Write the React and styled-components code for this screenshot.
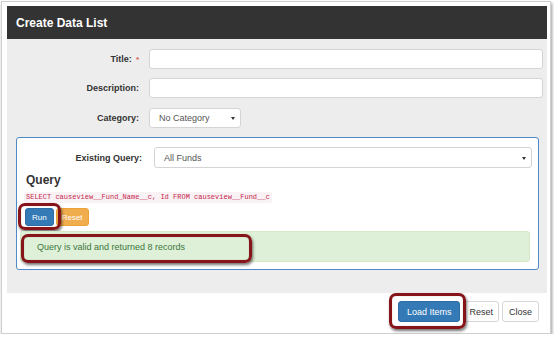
import styled, { createGlobalStyle } from "styled-components";

const GlobalStyle = createGlobalStyle`
  body {
    margin: 0;
    background: #fff;
    font-family: "Liberation Sans", Arial, sans-serif;
    color: #333;
  }
`;

const Frame = styled.div`
  box-sizing: border-box;
  width: 550px;
  height: 333px;
  margin: 1px 0 0 1px;
  border: 1px solid #cfcfcf;
  box-shadow: 1px 2px 3px rgba(0, 0, 0, 0.4);
  padding: 4px 4px 0 5px;
  background: #fff;
`;

const Modal = styled.div`
  width: 540px;
  display: flex;
  flex-direction: column;
`;

const Header = styled.div`
  height: 33px;
  background: #333;
  color: #fff;
  display: flex;
  align-items: center;
  padding-left: 9px;
  font-size: 12px;
  font-weight: bold;
`;

const Body = styled.div`
  box-sizing: border-box;
  height: 254px;
  background: #ededed;
  padding: 10px 4px 0 0;
  display: flex;
  flex-direction: column;
`;

const Row = styled.div`
  display: flex;
  align-items: center;
  gap: ${p => p.$gap || 10}px;
  margin-bottom: ${p => p.$mb || 0}px;
`;

const Label = styled.label`
  width: ${p => p.$w || 132}px;
  text-align: right;
  font-size: 9px;
  font-weight: bold;
  color: #333;
`;

const Req = styled.span`
  color: #d9534f;
  margin-left: 4px;
  font-size: 8px;
`;

const Input = styled.div`
  box-sizing: border-box;
  flex: 1;
  height: 20px;
  background: #fff;
  border: 1px solid #d4d4d4;
  border-radius: 3px;
`;

const Select = styled.div`
  box-sizing: border-box;
  position: relative;
  width: ${p => (p.$w ? `${p.$w}px` : "auto")};
  flex: ${p => (p.$w ? "none" : 1)};
  height: ${p => p.$h || 20}px;
  background: #fff;
  border: 1px solid #d4d4d4;
  border-radius: 3px;
  padding-left: 9px;
  display: flex;
  align-items: center;
  font-size: 9px;
  color: #555;

  &::after {
    content: "";
    position: absolute;
    right: 5px;
    top: 50%;
    margin-top: -1px;
    border-left: 2px solid transparent;
    border-right: 2px solid transparent;
    border-top: 3px solid #333;
  }
`;

const Panel = styled.div`
  box-sizing: border-box;
  height: 133px;
  margin: 0 4px 0 9px;
  background: #fff;
  border: 1px solid #4f8ac9;
  border-radius: 3px;
  padding: 9px 6px 0 3px;
  display: flex;
  flex-direction: column;
`;

const Heading = styled.div`
  margin: 5px 0 0 6px;
  font-size: 12px;
  line-height: 15px;
  font-weight: bold;
  color: #333;
`;

const Code = styled.code`
  align-self: flex-start;
  margin: 4px 0 0 4px;
  padding: 1px 2px;
  font-family: "Liberation Mono", "Courier New", monospace;
  font-size: 7px;
  line-height: 9px;
  color: #c7254e;
  background: #f9f2f4;
  border-radius: 2px;
`;

const ButtonRow = styled.div`
  display: flex;
  gap: ${p => p.$gap || 2}px;
  margin: ${p => p.$m || "0"};
  justify-content: ${p => p.$justify || "flex-start"};
`;

const Anchor = styled.div`
  position: relative;
  display: flex;
`;

const Button = styled.button`
  box-sizing: border-box;
  height: ${p => p.$h || 18}px;
  padding: 0 ${p => p.$px || 7}px;
  font-family: inherit;
  font-size: ${p => p.$fs || 8}px;
  border-radius: 3px;
  border: 1px solid
    ${p => (p.$kind === "primary" ? "#2e6da4" : p.$kind === "warning" ? "#eea236" : "#d6d6d6")};
  background: ${p => (p.$kind === "primary" ? "#337ab7" : p.$kind === "warning" ? "#f0ad4e" : "#fff")};
  color: ${p => (p.$kind === "primary" || p.$kind === "warning" ? "#fff" : "#333")};
`;

const Alert = styled.div`
  position: relative;
  box-sizing: border-box;
  height: 31px;
  margin: 5px 2px 0 0;
  background: #dff0d8;
  border: 1px solid #d6e9c6;
  border-radius: 3px;
  padding-left: 16px;
  display: flex;
  align-items: center;
  font-size: 9px;
  color: #3c763d;
`;

const Highlight = styled.span`
  position: absolute;
  top: ${p => p.$t}px;
  left: ${p => p.$l}px;
  width: ${p => p.$w}px;
  height: ${p => p.$h}px;
  box-sizing: border-box;
  border: 3px solid #861418;
  border-radius: 7px;
  box-shadow: 1px 2px 3px rgba(0, 0, 0, 0.55), inset 0 0 1px rgba(0, 0, 0, 0.4);
  pointer-events: none;
`;

const Footer = styled.div`
  height: 40px;
  padding: 8px 8px 0 0;
  box-sizing: border-box;
`;

export default function App() {
  return (
    <>
      <GlobalStyle />
      <Frame>
        <Modal>
          <Header>Create Data List</Header>
          <Body>
            <Row $mb={9}>
              <Label>
                Title:<Req>*</Req>
              </Label>
              <Input />
            </Row>
            <Row $mb={10}>
              <Label>Description:</Label>
              <Input />
            </Row>
            <Row $mb={9}>
              <Label>Category:</Label>
              <Select $w={92}>No Category</Select>
            </Row>
            <Panel>
              <Row $gap={12}>
                <Label $w={122}>Existing Query:</Label>
                <Select $h={21}>All Funds</Select>
              </Row>
              <Heading>Query</Heading>
              <Code>SELECT causeview__Fund_Name__c, Id FROM causeview__Fund__c</Code>
              <ButtonRow $m="5px 0 0 5px">
                <Anchor>
                  <Button $kind="primary" $px={6}>Run</Button>
                  <Highlight $t={-5} $l={-7} $w={43} $h={27} />
                </Anchor>
                <Button $kind="warning" $px={5}>Reset</Button>
              </ButtonRow>
              <Alert>
                Query is valid and returned 8 records
                <Highlight $t={2} $l={0} $w={231} $h={29} />
              </Alert>
            </Panel>
          </Body>
          <Footer>
            <ButtonRow $gap={3} $justify="flex-end">
              <Anchor>
                <Button $kind="primary" $h={21} $px={8} $fs={9}>Load Items</Button>
                <Highlight $t={-8} $l={-9} $w={77} $h={36} />
              </Anchor>
              <Button $h={21} $px={5} $fs={9}>Reset</Button>
              <Button $h={21} $px={6} $fs={9}>Close</Button>
            </ButtonRow>
          </Footer>
        </Modal>
      </Frame>
    </>
  );
}
